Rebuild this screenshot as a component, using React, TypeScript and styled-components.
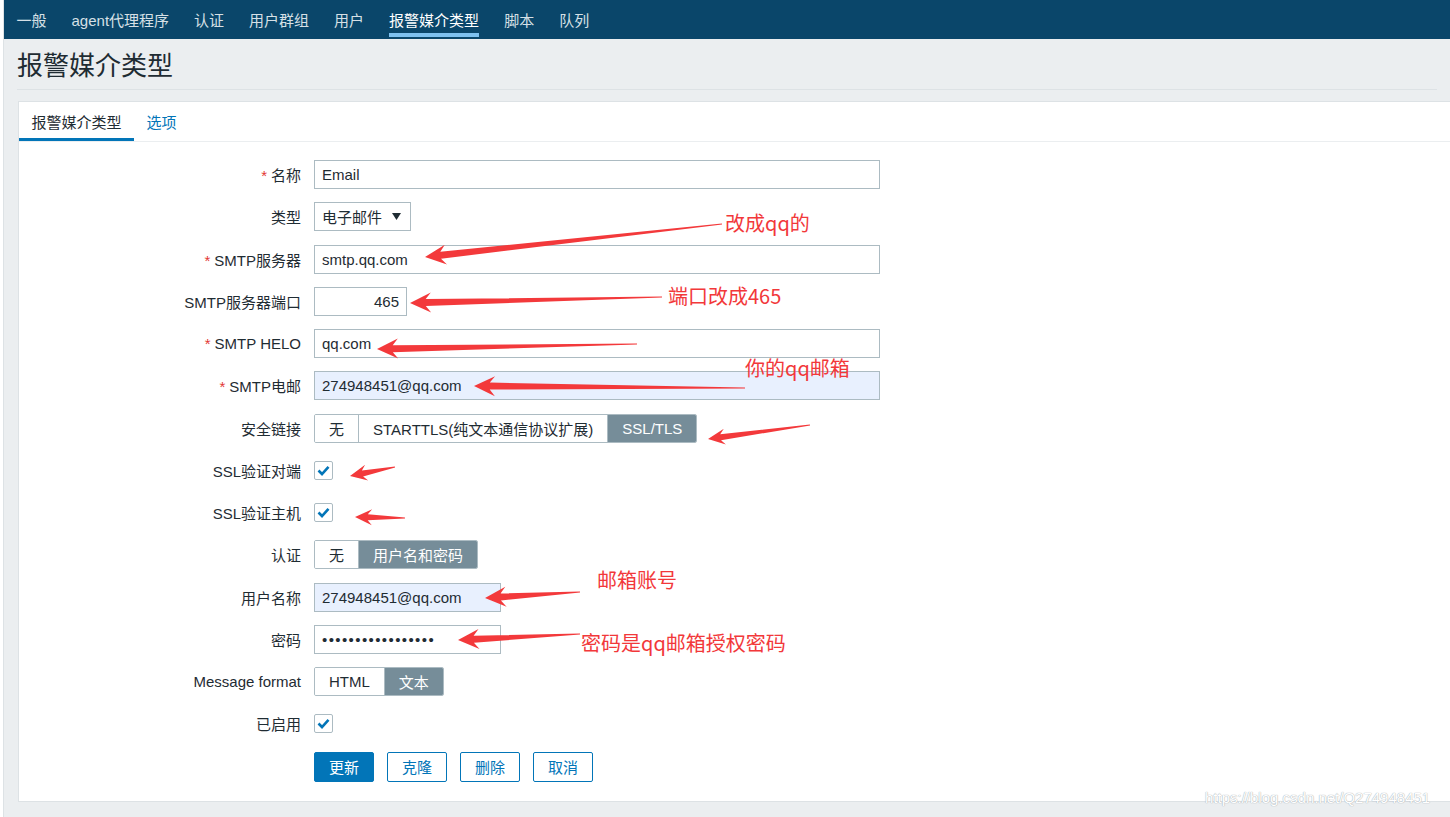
import React from 'react';
import styled, { createGlobalStyle, css } from 'styled-components';

const GlobalStyle = createGlobalStyle`
  html, body {
    margin: 0;
    padding: 0;
    background: #fff;
  }
  body {
    font-family: 'Liberation Sans', Arial, 'Noto Sans CJK SC', sans-serif;
    font-size: 15px;
    color: #1f2c33;
  }
`;

const Screen = styled.div`
  position: relative;
  width: 1450px;
  height: 817px;
  overflow: hidden;
`;

const Shell = styled.div`
  margin-left: 3px;
  height: 817px;
  border-left: 1px solid #dde2e5;
  background: #ebeef0;
`;

const TopNav = styled.nav`
  display: flex;
  height: 39px;
  background: #0a466a;
`;

const NavItem = styled.a<{ $active?: boolean }>`
  position: relative;
  display: flex;
  align-items: center;
  padding: 0 12.5px;
  color: ${(p) => (p.$active ? '#ffffff' : '#d6e0e6')};
  text-decoration: none;
  white-space: nowrap;

  ${(p) =>
    p.$active &&
    css`
      &::after {
        content: '';
        position: absolute;
        left: 12.5px;
        right: 12.5px;
        bottom: 2px;
        height: 4px;
        background: #7ec1ef;
      }
    `}
`;

const Header = styled.header`
  margin: 0 13px;
  padding: 12px 0 7px;
  border-bottom: 1px solid #dde2e5;
`;

const Title = styled.h1`
  margin: 0;
  font-size: 26px;
  font-weight: normal;
  line-height: 31px;
  color: #1f2c33;
`;

const Panel = styled.section`
  margin: 11px 0 0 14px;
  background: #fff;
  border: 1px solid #dde2e5;
  border-right: none;
`;

const TabBar = styled.div`
  display: flex;
  height: 39px;
  border-bottom: 1px solid #ebeef0;
`;

const Tab = styled.a<{ $active?: boolean }>`
  display: flex;
  align-items: center;
  padding: 0 12.5px;
  text-decoration: none;
  color: ${(p) => (p.$active ? '#1f2c33' : '#0275b8')};
  box-shadow: ${(p) => (p.$active ? 'inset 0 -3px 0 #0275b8' : 'none')};
`;

const Form = styled.div`
  display: flex;
  flex-direction: column;
  gap: 13.25px;
  padding: 18px 0 20px;
`;

const Row = styled.div`
  display: grid;
  grid-template-columns: 282px 1fr;
  column-gap: 13px;
  align-items: center;
  height: 29px;
`;

const Label = styled.div`
  text-align: right;
  white-space: nowrap;
`;

const Star = styled.span`
  color: #e33734;
  margin-right: 4px;
`;

const Field = styled.div`
  display: flex;
  align-items: center;
`;

const TextInput = styled.input<{ $width: number; $fill?: boolean; $right?: boolean }>`
  box-sizing: border-box;
  width: ${(p) => p.$width}px;
  height: 29px;
  padding: 0 7px;
  border: 1px solid #acbbc2;
  border-radius: 0;
  background: ${(p) => (p.$fill ? '#e8f0fe' : '#fff')};
  color: #1f2c33;
  font: inherit;
  text-align: ${(p) => (p.$right ? 'right' : 'left')};
  outline: none;
`;

const PasswordInput = styled(TextInput)`
  letter-spacing: 1.4px;
`;

const SelectBox = styled.div`
  box-sizing: border-box;
  display: flex;
  align-items: center;
  justify-content: space-between;
  width: 97px;
  height: 29px;
  padding: 0 9px 0 7px;
  border: 1px solid #acbbc2;
`;

const SegGroup = styled.div`
  box-sizing: border-box;
  display: inline-flex;
  height: 29px;
  border: 1px solid #acbbc2;
  border-radius: 2px;
  overflow: hidden;
`;

const Segment = styled.span<{ $on?: boolean }>`
  display: flex;
  align-items: center;
  padding: 0 14px;
  white-space: nowrap;
  background: ${(p) => (p.$on ? '#768d99' : '#fff')};
  color: ${(p) => (p.$on ? '#fff' : '#1f2c33')};

  & + & {
    border-left: 1px solid #acbbc2;
  }
`;

const Check = styled.span`
  box-sizing: border-box;
  display: flex;
  align-items: center;
  justify-content: center;
  width: 19px;
  height: 19px;
  border: 1px solid #acbbc2;
  border-radius: 2px;
  background: #fff;
`;

const Buttons = styled.div`
  display: flex;
  gap: 13px;
`;

const Button = styled.button<{ $primary?: boolean }>`
  box-sizing: border-box;
  height: 30px;
  padding: 0 14px;
  border: 1px solid #0275b8;
  border-radius: 2px;
  font: inherit;
  background: ${(p) => (p.$primary ? '#0275b8' : '#fff')};
  color: ${(p) => (p.$primary ? '#fff' : '#0275b8')};
`;

/* screenshot annotations drawn over the page */
const Overlay = styled.svg`
  position: absolute;
  left: 0;
  top: 0;
  pointer-events: none;
`;

const Note = styled.span`
  position: absolute;
  font-family: 'Noto Sans CJK SC', sans-serif;
  font-size: 20px;
  line-height: 24px;
  color: #f2383a;
  white-space: nowrap;
`;

const Watermark = styled.span`
  position: absolute;
  left: 1205px;
  top: 789px;
  font-size: 15px;
  line-height: 18px;
  color: #fff;
  text-shadow: 0 0 1px #a9b0b6, 0 0 1px #a9b0b6;
`;

const CheckMark = () => (
  <svg width="13" height="11" viewBox="0 0 13 11">
    <path d="M1.5 5.5 L5 9 L11.5 1.8" fill="none" stroke="#0275b8" strokeWidth="2.6" />
  </svg>
);

const Caret = () => (
  <svg width="9" height="7" viewBox="0 0 9 7">
    <path d="M0 0 H9 L4.5 7 Z" fill="#1f2c33" />
  </svg>
);

type Arrow = { tail: [number, number]; tip: [number, number]; small?: boolean };

const arrows: Arrow[] = [
  { tail: [722, 224], tip: [425, 257] },
  { tail: [662, 297], tip: [410, 303] },
  { tail: [637, 344], tip: [377, 349] },
  { tail: [745, 388], tip: [474, 386] },
  { tail: [810, 425], tip: [708, 439], small: true },
  { tail: [395, 467], tip: [350, 476], small: true },
  { tail: [405, 518], tip: [355, 517], small: true },
  { tail: [580, 592], tip: [485, 598] },
  { tail: [580, 634], tip: [458, 640] },
];

function arrowPoints({ tail, tip, small }: Arrow) {
  const [tx, ty] = tail;
  const [hx, hy] = tip;
  const len = Math.hypot(hx - tx, hy - ty);
  const dx = (hx - tx) / len;
  const dy = (hy - ty) / len;
  const nx = -dy;
  const ny = dx;
  const L = small ? 17 : 21;
  const W = small ? 8 : 10;
  const w = small ? 3 : 3.5;
  const bx = hx - dx * L * 0.75;
  const by = hy - dy * L * 0.75;
  const wx = hx - dx * L;
  const wy = hy - dy * L;
  const pts = [
    [tx + nx * 0.5, ty + ny * 0.5],
    [bx + nx * w, by + ny * w],
    [wx + nx * W, wy + ny * W],
    [hx, hy],
    [wx - nx * W, wy - ny * W],
    [bx - nx * w, by - ny * w],
    [tx - nx * 0.5, ty - ny * 0.5],
  ];
  return pts.map((p) => `${p[0].toFixed(1)},${p[1].toFixed(1)}`).join(' ');
}

const navItems = ['一般', 'agent代理程序', '认证', '用户群组', '用户', '报警媒介类型', '脚本', '队列'];

export default function App() {
  return (
    <Screen>
      <GlobalStyle />
      <Shell>
        <TopNav>
          {navItems.map((item) => (
            <NavItem key={item} $active={item === '报警媒介类型'}>
              {item}
            </NavItem>
          ))}
        </TopNav>

        <Header>
          <Title>报警媒介类型</Title>
        </Header>

        <Panel>
          <TabBar>
            <Tab $active>报警媒介类型</Tab>
            <Tab>选项</Tab>
          </TabBar>

          <Form>
            <Row>
              <Label><Star>*</Star>名称</Label>
              <Field><TextInput $width={566} readOnly value="Email" /></Field>
            </Row>
            <Row>
              <Label>类型</Label>
              <Field>
                <SelectBox>电子邮件<Caret /></SelectBox>
              </Field>
            </Row>
            <Row>
              <Label><Star>*</Star>SMTP服务器</Label>
              <Field><TextInput $width={566} readOnly value="smtp.qq.com" /></Field>
            </Row>
            <Row>
              <Label>SMTP服务器端口</Label>
              <Field><TextInput $width={93} $right readOnly value="465" /></Field>
            </Row>
            <Row>
              <Label><Star>*</Star>SMTP HELO</Label>
              <Field><TextInput $width={566} readOnly value="qq.com" /></Field>
            </Row>
            <Row>
              <Label><Star>*</Star>SMTP电邮</Label>
              <Field><TextInput $width={566} $fill readOnly value="274948451@qq.com" /></Field>
            </Row>
            <Row>
              <Label>安全链接</Label>
              <Field>
                <SegGroup>
                  <Segment>无</Segment>
                  <Segment>STARTTLS(纯文本通信协议扩展)</Segment>
                  <Segment $on>SSL/TLS</Segment>
                </SegGroup>
              </Field>
            </Row>
            <Row>
              <Label>SSL验证对端</Label>
              <Field><Check><CheckMark /></Check></Field>
            </Row>
            <Row>
              <Label>SSL验证主机</Label>
              <Field><Check><CheckMark /></Check></Field>
            </Row>
            <Row>
              <Label>认证</Label>
              <Field>
                <SegGroup>
                  <Segment>无</Segment>
                  <Segment $on>用户名和密码</Segment>
                </SegGroup>
              </Field>
            </Row>
            <Row>
              <Label>用户名称</Label>
              <Field><TextInput $width={187} $fill readOnly value="274948451@qq.com" /></Field>
            </Row>
            <Row>
              <Label>密码</Label>
              <Field>
                <PasswordInput type="password" $width={187} readOnly value="qwertyuiopasdfghj" />
              </Field>
            </Row>
            <Row>
              <Label>Message format</Label>
              <Field>
                <SegGroup>
                  <Segment>HTML</Segment>
                  <Segment $on>文本</Segment>
                </SegGroup>
              </Field>
            </Row>
            <Row>
              <Label>已启用</Label>
              <Field><Check><CheckMark /></Check></Field>
            </Row>
            <Row>
              <Label />
              <Buttons>
                <Button $primary>更新</Button>
                <Button>克隆</Button>
                <Button>删除</Button>
                <Button>取消</Button>
              </Buttons>
            </Row>
          </Form>
        </Panel>
      </Shell>

      <Overlay width="1450" height="817">
        {arrows.map((a, i) => (
          <polygon key={i} points={arrowPoints(a)} fill="#f3393b" />
        ))}
      </Overlay>
      <Note style={{ left: 725, top: 211 }}>改成qq的</Note>
      <Note style={{ left: 668, top: 284 }}>端口改成465</Note>
      <Note style={{ left: 745, top: 356 }}>你的qq邮箱</Note>
      <Note style={{ left: 597, top: 568 }}>邮箱账号</Note>
      <Note style={{ left: 581, top: 631 }}>密码是qq邮箱授权密码</Note>
      <Watermark>https://blog.csdn.net/Q274948451</Watermark>
    </Screen>
  );
}
